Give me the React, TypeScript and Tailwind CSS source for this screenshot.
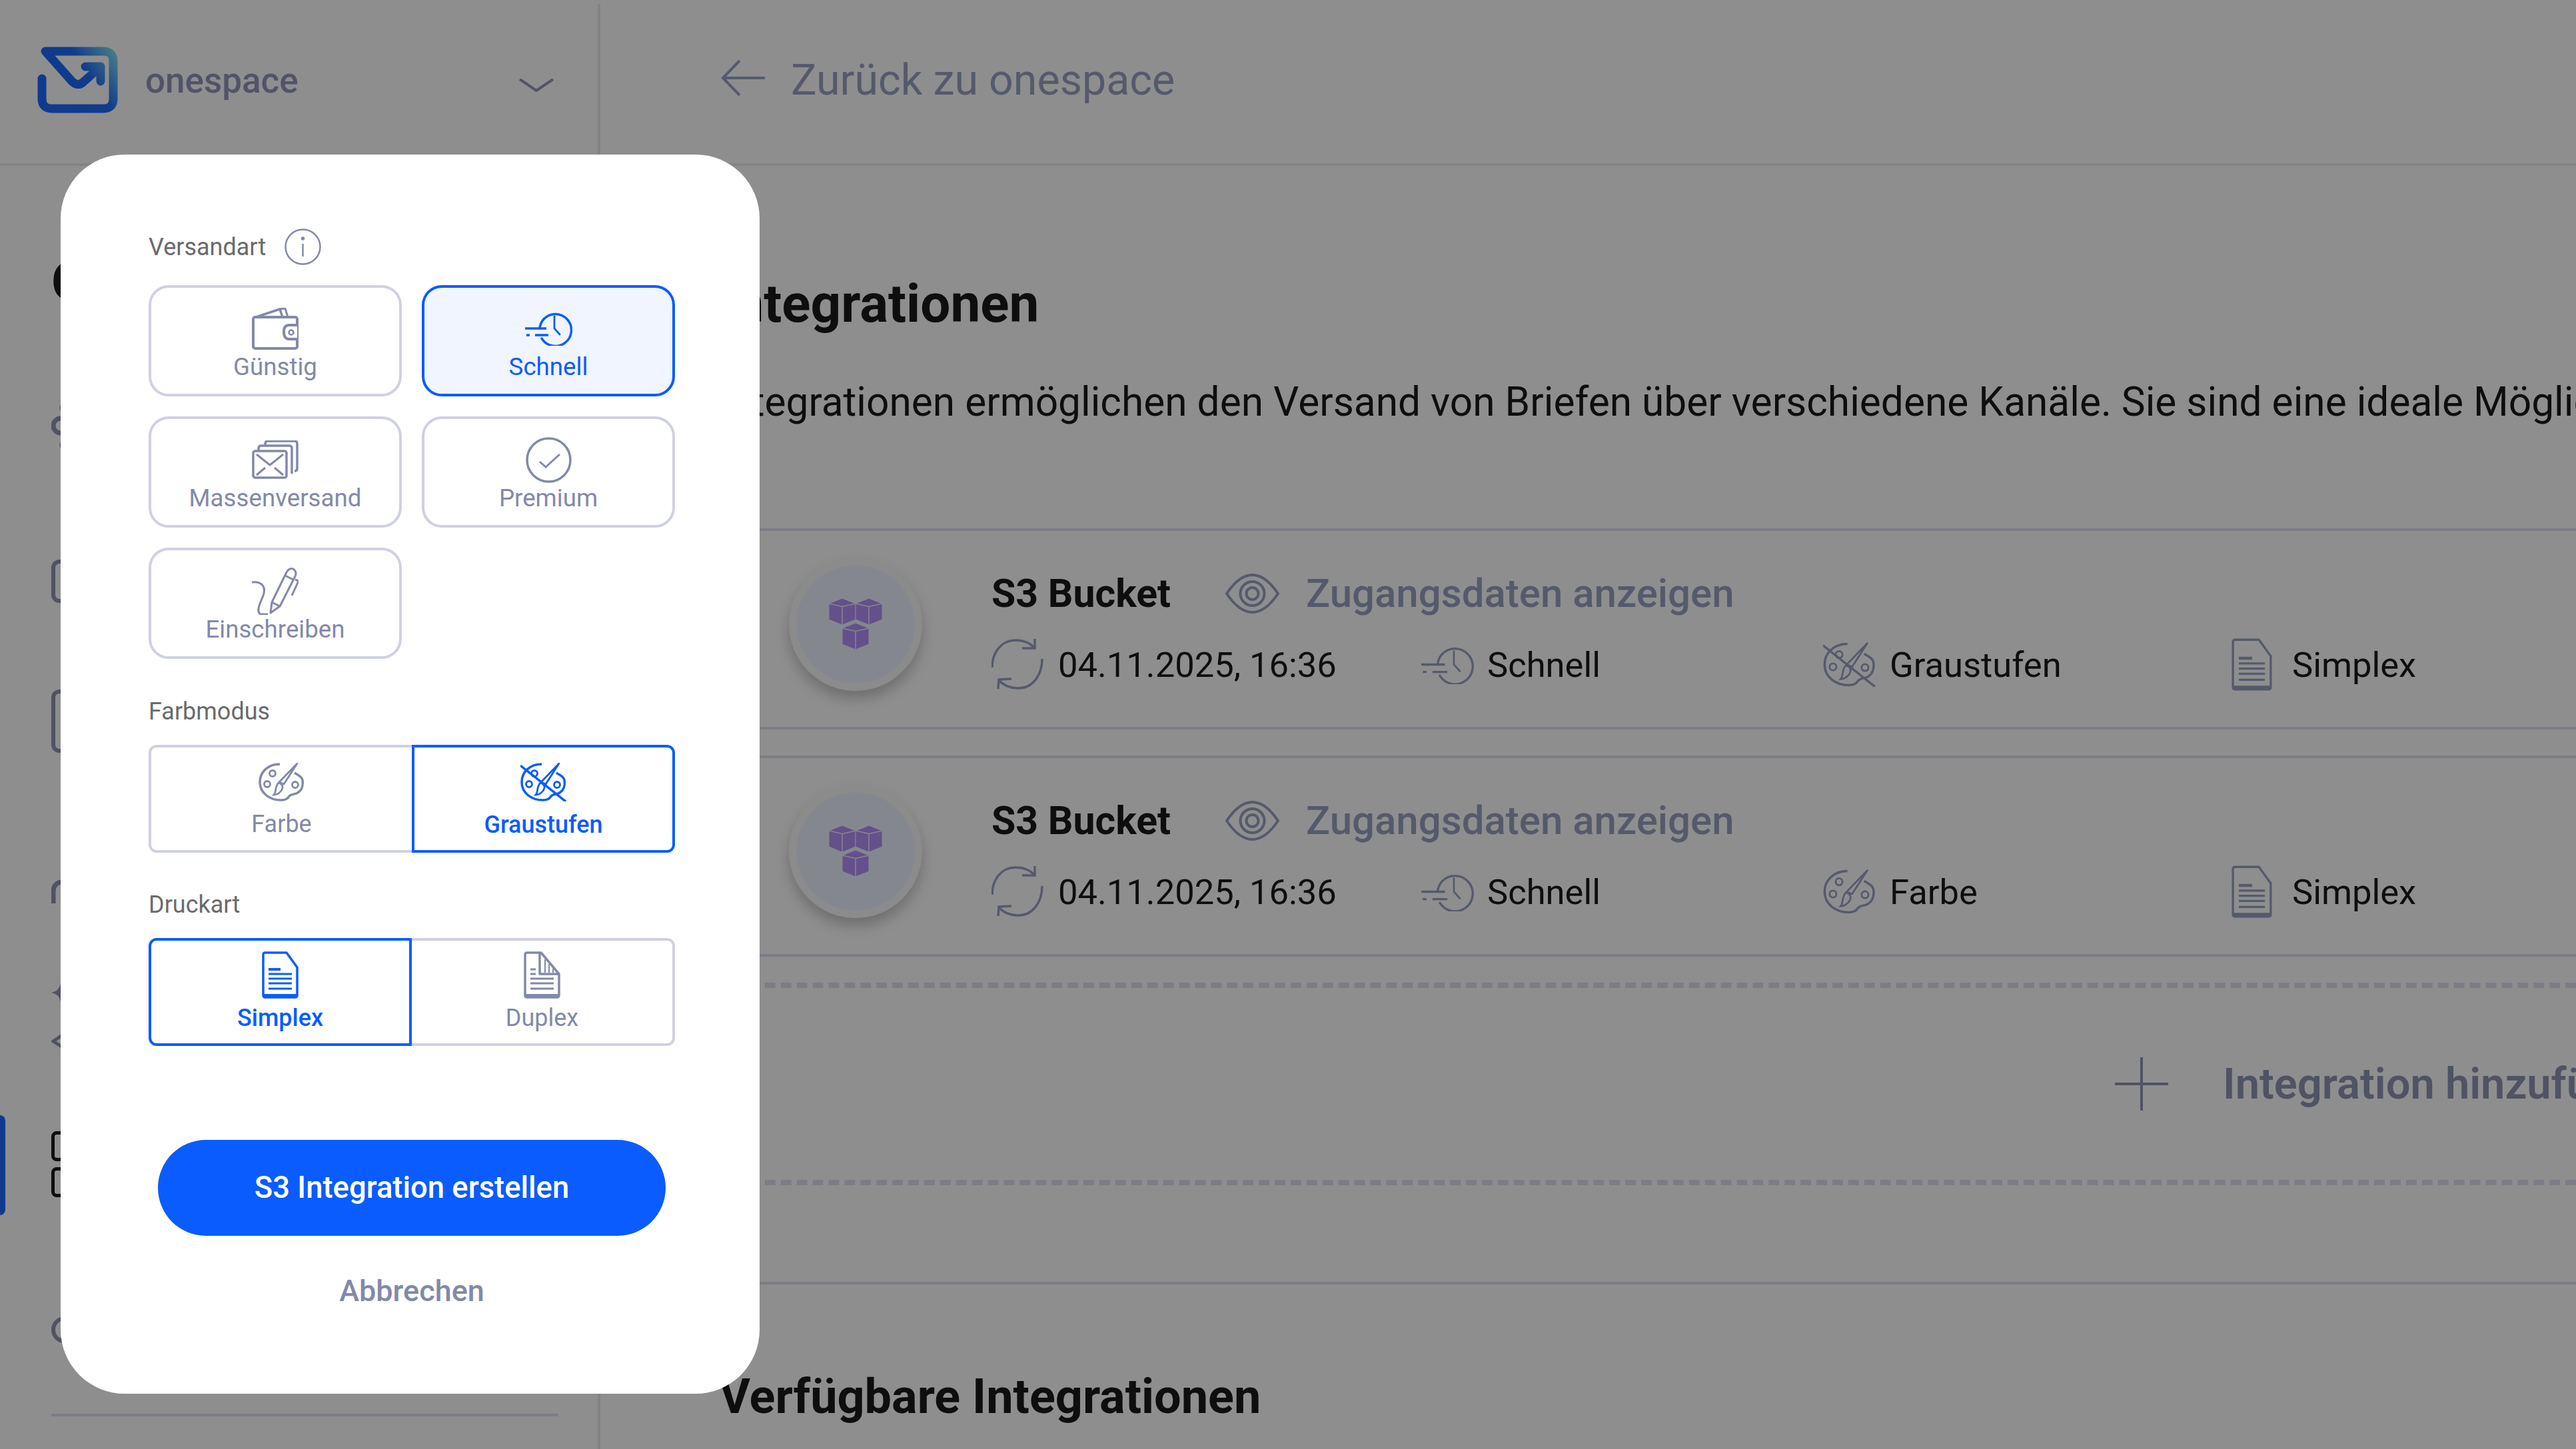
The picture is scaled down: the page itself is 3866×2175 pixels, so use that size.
import type { ReactNode } from "react";

function Wallet() {
  return (
    <svg width="70" height="63" viewBox="0 0 70 63" fill="none" stroke="currentColor" strokeWidth="4" strokeLinejoin="round">
      <path d="M6 14 L42 2 L46 14" strokeWidth="3.5" />
      <path d="M41 2 L50 1 L54 14" strokeWidth="3" />
      <rect x="2" y="14" width="66" height="47" rx="3" />
      <path d="M68 26 H56 Q48 26 48 36 Q48 47 56 47 H68" fill="#fff" />
      <circle cx="59" cy="37" r="3.5" strokeWidth="2.5" />
    </svg>
  );
}

function FastClock({ w = 72, h = 52, sw = 3.5 }: { w?: number; h?: number; sw?: number }) {
  return (
    <svg width={w} height={h} viewBox="0 0 72 52" fill="none" stroke="currentColor" strokeWidth={sw} strokeLinecap="round">
      <path d="M29 12 A24 24 0 1 1 26 41" />
      <path d="M29 12 A24 24 0 0 0 23 26" />
      <path d="M45 8 V26 L53 35" strokeWidth={sw * 0.8} />
      <path d="M1 26 H33" strokeLinecap="butt" />
      <path d="M3 36 H8 M16 36 H36" strokeLinecap="butt" />
    </svg>
  );
}

function Envelopes() {
  return (
    <svg width="70" height="58" viewBox="0 0 70 58" fill="none" stroke="currentColor" strokeWidth="3.5" strokeLinejoin="round">
      <path d="M20 8 V5 Q20 1 24 1 H64 Q68 1 68 5 V42 Q68 46 64 46" />
      <path d="M10 16 V12 Q10 8 14 8 H56 Q60 8 60 12 V50" />
      <rect x="2" y="16" width="50" height="40" rx="3" />
      <path d="M7 21 L27 37 L47 21 M7 52 L20 41 M47 52 L34 41" strokeWidth="3" />
    </svg>
  );
}

function CheckCircle() {
  return (
    <svg width="69" height="69" viewBox="0 0 69 69" fill="none" stroke="currentColor" strokeWidth="3.5">
      <circle cx="34.5" cy="34.5" r="32.5" />
      <path d="M21 37 L30 45 L51 26" strokeWidth="3" />
    </svg>
  );
}

function Pen() {
  return (
    <svg width="70" height="71" viewBox="0 0 70 71" fill="none" stroke="currentColor" strokeWidth="3" strokeLinejoin="round">
      <path d="M0 22 C14 20 22 28 17 42 C12 54 6 66 13 70 H24" />
      <path d="M28 68 L30 52 L52 7 Q56 0 62 2 Q68 6 65 13 L42 58 Z" />
      <path d="M65 18 L70 20 L60 42 M30 52 L42 58 M50 12 L62 18" />
    </svg>
  );
}

function Palette({ crossed = false, w = 69, h = 58, sw = 3.5 }: { crossed?: boolean; w?: number; h?: number; sw?: number }) {
  return (
    <svg width={w} height={h} viewBox="0 0 69 58" fill="none" stroke="currentColor" strokeWidth={sw}>
      <path d="M32 2 C14 2 2 14 2 29 C2 45 16 56 34 56 C40 56 44 54 46 50 C50 46 56 48 60 44 C66 40 67 32 66 26 C65 20 58 18 54 15" />
      <circle cx="21" cy="16" r="4.5" strokeWidth={sw * 0.8} />
      <circle cx="13" cy="32" r="4.5" strokeWidth={sw * 0.8} />
      <circle cx="55" cy="33" r="4.5" strokeWidth={sw * 0.8} />
      <path d="M58 1 L38 32 L31 29 Z" strokeWidth={sw * 0.8} strokeLinejoin="round" />
      <path d="M30 30 C36 32 38 36 34 42 C30 47 26 48 23 48 C27 44 24 36 30 30 Z" strokeWidth={sw * 0.8} />
      {crossed && <path d="M0 4 L68 58" />}
    </svg>
  );
}

function DocSimple({ w = 55, h = 71, sw = 3.5 }: { w?: number; h?: number; sw?: number }) {
  return (
    <svg width={w} height={h} viewBox="0 0 55 71" fill="none" stroke="currentColor" strokeWidth={sw} strokeLinejoin="round">
      <path d="M5 2 H37 L53 24 V66 Q53 69 50 69 H5 Q2 69 2 66 V5 Q2 2 5 2 Z" />
      <path d="M10 27 H28" strokeWidth="4" />
      <path d="M10 34 H45 M10 41 H45 M10 48 H45 M10 56 H45" strokeWidth="3" />
      <path d="M2 66 H53" strokeWidth="4" />
    </svg>
  );
}

function DocDuplex() {
  return (
    <svg width="55" height="71" viewBox="0 0 55 71" fill="none" stroke="currentColor" strokeWidth="3.5" strokeLinejoin="round">
      <path d="M5 2 H26 L53 34 V66 Q53 69 50 69 H5 Q2 69 2 66 V5 Q2 2 5 2 Z" />
      <path d="M24 2 V34 H53" />
      <path d="M32 12 V32 M38 19 V32 M44 26 V32" strokeWidth="2" />
      <path d="M10 27 H18 M10 34 H18" strokeWidth="3" />
      <path d="M10 41 H45 M10 48 H45 M10 56 H45" strokeWidth="3" />
      <path d="M2 66 H53" strokeWidth="4" />
    </svg>
  );
}

function Eye() {
  return (
    <svg width="81" height="60" viewBox="0 0 81 60" fill="none" stroke="currentColor" strokeWidth="4">
      <path d="M2 30 C16 9 28 2 40.5 2 C53 2 65 9 79 30 C65 51 53 58 40.5 58 C28 58 16 51 2 30 Z" />
      <circle cx="40.5" cy="30" r="18" />
      <circle cx="40.5" cy="30" r="9" />
    </svg>
  );
}

function Sync() {
  return (
    <svg width="78" height="76" viewBox="0 0 78 76" fill="none" stroke="currentColor" strokeWidth="3.5">
      <path d="M1 43 C1 20 15 2 36 2 C48 2 58 6 65 14" />
      <path d="M65 0 V14 H46" />
      <path d="M76 30 C76 55 61 74 41 74 C29 74 18 70 11 62" />
      <path d="M10 75 L11 61 L30 60" />
    </svg>
  );
}

function S3Cubes() {
  const box = (x: number, y: number) => (
    <g transform={`translate(${x} ${y})`}>
      <path d="M20 0 L40 8 V32 L20 40 L0 32 V8 Z" fill="#b490f8" stroke="#edf5ff" strokeWidth="1" />
      <path d="M0 8 L20 12.5 L40 8 M20 12.5 V40" stroke="#edf5ff" strokeWidth="1.5" fill="none" />
    </g>
  );
  return (
    <svg width="82" height="78" viewBox="0 0 82 78">
      {box(1, 0)}
      {box(41, 0)}
      {box(21, 37)}
    </svg>
  );
}

function Logo() {
  return (
    <svg width="121" height="100" viewBox="0 0 121 100" fill="none" stroke="url(#logo-grad)" strokeLinejoin="round" strokeLinecap="round">
      <defs>
        <linearGradient id="logo-grad" gradientUnits="userSpaceOnUse" x1="30" y1="60" x2="121" y2="0">
          <stop offset="0" stopColor="#1b68ff" />
          <stop offset="0.45" stopColor="#1f6cf8" />
          <stop offset="1" stopColor="#8ef0f4" />
        </linearGradient>
      </defs>
      <path d="M7 48 V78 Q7 93 22 93 H99 Q114 93 114 78 V22 Q114 7 99 7 H12 L52 52 Q60 60 68 54 L95 30" strokeWidth="13" />
      <path d="M72 30 H95 V52" strokeWidth="13" />
    </svg>
  );
}

function Option({ label, icon, active = false }: { label: string; icon: ReactNode; active?: boolean }) {
  return (
    <div
      className={
        active
          ? "h-[167px] rounded-[30px] border-4 border-[#0a5cff] bg-[#f0f5ff] text-[#0a5cff] flex flex-col items-center justify-start"
          : "h-[167px] rounded-[30px] border-4 border-[#cfd1e0] bg-white text-[#8389a8] flex flex-col items-center justify-start"
      }
    >
      <div className="h-[78px] mt-[22px] flex items-center justify-center">{icon}</div>
      <div className="text-[36.7px] leading-[40px] -mt-[1px]">{label}</div>
    </div>
  );
}

function Label({ children }: { children: ReactNode }) {
  return <div className="text-[#6b6b6b] text-[36px] leading-[46px]">{children}</div>;
}

function CardRow({ mode, crossed }: { mode: string; crossed: boolean }) {
  return (
    <div className="h-[302px] border-y-4 border-[#dde1f1] flex items-center pl-[108px]">
      <div className="w-[200px] h-[200px] rounded-full bg-[#fafafa] shadow-[0_12px_20px_rgba(0,0,0,0.22)] flex items-center justify-center mb-[14px] shrink-0">
        <div className="w-[178px] h-[178px] rounded-full bg-[#edf5ff] flex items-center justify-center">
          <S3Cubes />
        </div>
      </div>
      <div className="ml-[104px] flex flex-col gap-[37px] text-[#1a1a1a]">
        <div className="flex items-center h-[70px]">
          <span className="text-[59px] leading-[70px] font-bold w-[351px]">S3 Bucket</span>
          <span className="text-[#99a2c0]"><Eye /></span>
          <span className="ml-[40px] text-[60px] leading-[70px] font-medium text-[#99a2c0]">Zugangsdaten anzeigen</span>
        </div>
        <div className="flex items-center h-[70px] text-[52.5px] leading-[70px]">
          <div className="w-[644px] flex items-center">
            <span className="text-[#99a2c0] -mt-[2px]"><Sync /></span>
            <span className="ml-[22px]">04.11.2025, 16:36</span>
          </div>
          <div className="w-[604px] flex items-center">
            <span className="text-[#99a2c0]"><FastClock w={80} h={59} sw={3} /></span>
            <span className="ml-[20px]">Schnell</span>
          </div>
          <div className="w-[612px] flex items-center">
            <span className="text-[#99a2c0]"><Palette crossed={crossed} w={79} h={67} sw={3} /></span>
            <span className="ml-[21px]">{mode}</span>
          </div>
          <div className="flex items-center">
            <span className="text-[#99a2c0]"><DocSimple w={63} h={79} sw={3} /></span>
            <span className="ml-[29px]">Simplex</span>
          </div>
        </div>
      </div>
    </div>
  );
}

export default function App() {
  return (
    <div className="relative w-[3866px] h-[2175px] overflow-hidden bg-white font-['Roboto',sans-serif]">
      {/* header */}
      <div className="h-[249px] flex border-b-4 border-[#eaebef]">
        <div className="w-[901px] mt-[6px] border-r-4 border-[#eaebef] flex items-start pl-[56px]">
          <div className="mt-[64px]"><Logo /></div>
          <span className="ml-[41px] mt-[85px] text-[53px] leading-[60px] font-medium text-[#9298b8]">onespace</span>
          <svg className="ml-[331px] mt-[112px] text-[#9298b8]" width="52" height="20" viewBox="0 0 52 20" fill="none" stroke="currentColor" strokeWidth="4">
            <path d="M1 1 L26 18 L51 1" />
          </svg>
        </div>
        <div className="flex items-start pl-[181px]">
          <svg className="mt-[90px] text-[#99a2c0]" width="66" height="54" viewBox="0 0 66 54" fill="none" stroke="currentColor" strokeWidth="4">
            <path d="M66 27 H3 M28 1 L3 27 L28 53" />
          </svg>
          <span className="ml-[39px] mt-[80px] text-[64.5px] leading-[80px] text-[#99a2c0]">Zurück zu onespace</span>
        </div>
      </div>

      <div className="flex h-[1926px]">
        {/* sidebar, mostly behind the modal */}
        <div className="w-[901px] h-[2000px] border-r-4 border-[#eaebef] relative pl-[77px] flex flex-col text-[#8f96b0] shrink-0">
          <span className="absolute left-0 top-[1425px] w-[8px] h-[150px] bg-[#1f69ff] rounded-r-lg" />
          <div className="mt-[126px] text-[79px] leading-[96px] font-bold text-[#1a1a1a]">O</div>
          <svg className="mt-[132px]" width="60" height="75" viewBox="0 0 60 75" fill="none" stroke="currentColor" strokeWidth="7">
            <circle cx="22" cy="9" r="6" />
            <circle cx="14" cy="36" r="11" />
            <circle cx="22" cy="65" r="6" />
          </svg>
          <div className="mt-[162px] w-[60px] h-[65px] rounded-xl border-[6px] border-current" />
          <div className="mt-[130px] w-[60px] h-[95px] rounded-xl border-[6px] border-current" />
          <svg className="mt-[190px]" width="30" height="36" viewBox="0 0 30 36" fill="none" stroke="currentColor" strokeWidth="7">
            <path d="M3 36 V18 Q3 4 20 3" />
          </svg>
          <svg className="mt-[120px]" width="28" height="28" viewBox="0 0 28 28" fill="currentColor">
            <path d="M0 14 Q12 12 14 0 Q16 12 28 14 Q16 16 14 28 Q12 16 0 14 Z" />
          </svg>
          <svg className="mt-[45px]" width="28" height="27" viewBox="0 0 28 27" fill="none" stroke="currentColor" strokeWidth="5">
            <path d="M22 1 L3 14 L22 26" />
          </svg>
          <div className="mt-[122px] w-[60px] h-[45px] rounded-lg border-[5px] border-[#1a1a1a]" />
          <div className="mt-[9px] w-[60px] h-[45px] rounded-lg border-[5px] border-[#1a1a1a]" />
          <div className="mt-[179px] w-[60px] h-[40px] rounded-full border-[6px] border-current" />
          <div className="mt-[106px] w-[761px] h-[4px] bg-[#dde1f1]" />
        </div>

        {/* main */}
        <div className="min-w-0 flex-1 pl-[177px]">
          <h1 className="mt-[159px] text-[80px] leading-[96px] font-bold text-[#1a1a1a] whitespace-nowrap">Integrationen</h1>
          <p className="mt-[60px] text-[60.4px] leading-[80px] text-[#1a1a1a] whitespace-nowrap">
            Integrationen ermöglichen den Versand von Briefen über verschiedene Kanäle. Sie sind eine ideale Möglichkeit
          </p>
          <div className="mt-[149px] -ml-[2px]">
            <CardRow mode="Graustufen" crossed />
          </div>
          <div className="mt-[39px] -ml-[2px]">
            <CardRow mode="Farbe" crossed={false} />
          </div>
          <div className="mt-[39px] -ml-[2px] h-[304px] border-y-8 border-dashed border-[#dde1f1] flex items-center pl-[2098px]">
            <svg width="80" height="80" viewBox="0 0 80 80" className="shrink-0 text-[#8f96b0]" fill="none" stroke="currentColor" strokeWidth="4">
              <path d="M40 0 V80 M0 40 H80" />
            </svg>
            <span className="ml-[82px] text-[65px] leading-[80px] font-semibold whitespace-nowrap text-[#8f96b0]">Integration hinzufügen</span>
          </div>
          <div className="mt-[145px] -ml-[2px] h-[4px] bg-[#dde1f1]" />
          <h2 className="mt-[121px] ml-[1px] text-[72px] leading-[96px] font-bold text-[#1a1a1a] whitespace-nowrap">Verfügbare Integrationen</h2>
        </div>
      </div>

      {/* backdrop */}
      <div className="absolute inset-0 bg-black/[0.443]" />

      {/* modal */}
      <div className="absolute left-[91px] top-[232px] w-[1049px] h-[1860px] bg-white rounded-[96px] pl-[132px] pt-[111px]">
        <div className="w-[790px]">
          <div className="flex items-center h-[55px] mb-[30px]">
            <Label>Versandart</Label>
            <svg className="ml-[28px] text-[#8389a8]" width="55" height="55" viewBox="0 0 55 55" fill="none" stroke="currentColor" strokeWidth="2.5">
              <circle cx="27.5" cy="27.5" r="26" />
              <path d="M27.5 23 V42" />
              <circle cx="27.5" cy="15" r="1.5" fill="currentColor" />
            </svg>
          </div>
          <div className="grid grid-cols-2 gap-[30px]">
            <Option label="Günstig" icon={<Wallet />} />
            <Option label="Schnell" icon={<FastClock />} active />
            <Option label="Massenversand" icon={<Envelopes />} />
            <Option label="Premium" icon={<CheckCircle />} />
            <Option label="Einschreiben" icon={<Pen />} />
          </div>

          <div className="mt-[56px] mb-[27px]"><Label>Farbmodus</Label></div>
          <div className="grid grid-cols-2 h-[162px]">
            <div className="border-y-4 border-l-4 border-[#cfd1e0] rounded-l-xl flex flex-col items-center text-[#8389a8]">
              <div className="mt-[23px]"><Palette /></div>
              <div className="mt-[12px] text-[36px] leading-[44px]">Farbe</div>
            </div>
            <div className="border-4 border-[#0a5cff] rounded-r-xl flex flex-col items-center text-[#0a5cff]">
              <div className="mt-[23px]"><Palette crossed /></div>
              <div className="mt-[13px] text-[36px] leading-[44px] font-medium">Graustufen</div>
            </div>
          </div>

          <div className="mt-[55px] mb-[27px]"><Label>Druckart</Label></div>
          <div className="grid grid-cols-2 h-[162px]">
            <div className="border-4 border-[#0a5cff] rounded-l-xl flex flex-col items-center text-[#0a5cff]">
              <div className="mt-[16px]"><DocSimple /></div>
              <div className="mt-[7px] text-[36px] leading-[44px] font-medium">Simplex</div>
            </div>
            <div className="border-y-4 border-r-4 border-[#cfd1e0] rounded-r-xl flex flex-col items-center text-[#8389a8]">
              <div className="mt-[16px]"><DocDuplex /></div>
              <div className="mt-[7px] text-[36px] leading-[44px]">Duplex</div>
            </div>
          </div>

          <div className="mt-[141px] mx-[14px] h-[144px] rounded-full bg-[#0a5cff] flex items-center justify-center text-white text-[45.4px] font-medium">
            S3 Integration erstellen
          </div>
          <div className="mt-[57px] text-center text-[45px] leading-[52px] font-medium text-[#8389a8]">Abbrechen</div>
        </div>
      </div>
    </div>
  );
}
